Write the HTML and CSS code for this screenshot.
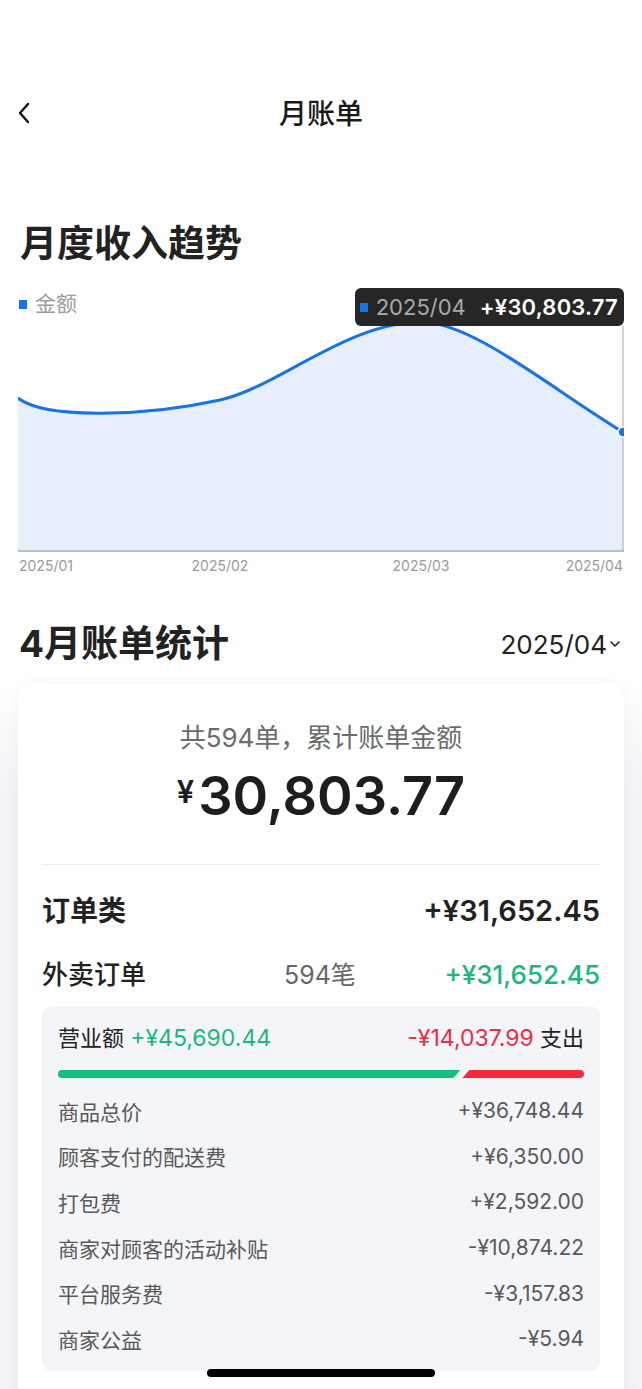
FILE: index.html
```html
<!DOCTYPE html>
<html lang="zh-CN">
<head>
    <meta charset="UTF-8">
    <meta name="viewport" content="width=device-width, initial-scale=1.0">
    <title>月账单</title>
    <link rel="stylesheet" href="styles.css">
</head>
<body>
    <div class="nav">
        <svg class="back" width="14" height="22" viewBox="0 0 14 22">
            <path d="M11 2 L3 11 L11 20" fill="none" stroke="#111" stroke-width="2.4" stroke-linecap="round" stroke-linejoin="round"/>
        </svg>
        <div class="nav-title">月账单</div>
    </div>

    <h2 class="section-title trend-title">月度收入趋势</h2>

    <div class="chart">
        <div class="legend"><span class="dot"></span>金额</div>
        <svg class="chart-svg" width="606" height="290" viewBox="0 0 606 290">
            <path d="M0,108 C25,128 120,128 202,110 C260,97 330,32 403,32 C455,32 535,100 605,142 L605,261 L0,261 Z" fill="#e7effc"/>
            <line x1="605" y1="36" x2="605" y2="261" stroke="#b5b5b5" stroke-width="1.2"/>
            <line x1="0" y1="261" x2="606" y2="261" stroke="#a9abb0" stroke-width="1.5"/>
            <path d="M0,108 C25,128 120,128 202,110 C260,97 330,32 403,32 C455,32 535,100 605,142" fill="none" stroke="#1a72e8" stroke-width="3"/>
            <circle cx="605" cy="142" r="5" fill="#1a72e8" stroke="#fff" stroke-width="1.5"/>
            <text x="1" y="281" class="axis" text-anchor="start">2025/01</text>
            <text x="202" y="281" class="axis" text-anchor="middle">2025/02</text>
            <text x="403" y="281" class="axis" text-anchor="middle">2025/03</text>
            <text x="605" y="281" class="axis" text-anchor="end">2025/04</text>
        </svg>
        <div class="tooltip">
            <span class="dot"></span>
            <span class="tip-date">2025/04</span>
            <span class="tip-value">+¥30,803.77</span>
        </div>
    </div>

    <div class="stats-head">
        <h2 class="section-title">4月账单统计</h2>
        <div class="month-pick">2025/04
            <svg width="10" height="6" viewBox="0 0 10 6"><path d="M1 1 L5 5 L9 1" fill="none" stroke="#222" stroke-width="1.6" stroke-linecap="round" stroke-linejoin="round"/></svg>
        </div>
    </div>

    <div class="stats-bg">
        <div class="card">
            <div class="total-label">共594单，累计账单金额</div>
            <div class="total-amount"><span class="yen">¥</span>30,803.77</div>
            <div class="divider"></div>

            <div class="cat-row">
                <span>订单类</span>
                <span>+¥31,652.45</span>
            </div>

            <div class="sub-row">
                <span class="sub-name">外卖订单</span>
                <span class="sub-count">594笔</span>
                <span class="sub-amount green">+¥31,652.45</span>
            </div>

            <div class="detail">
                <div class="split-row">
                    <span>营业额 <b class="green">+¥45,690.44</b></span>
                    <span><b class="red">-¥14,037.99</b> 支出</span>
                </div>
                <div class="bar">
                    <div class="bar-in" style="width: 76.5%"></div>
                    <div class="bar-out"></div>
                </div>
                <div class="item"><span>商品总价</span><span>+¥36,748.44</span></div>
                <div class="item"><span>顾客支付的配送费</span><span>+¥6,350.00</span></div>
                <div class="item"><span>打包费</span><span>+¥2,592.00</span></div>
                <div class="item"><span>商家对顾客的活动补贴</span><span>-¥10,874.22</span></div>
                <div class="item"><span>平台服务费</span><span>-¥3,157.83</span></div>
                <div class="item"><span>商家公益</span><span>-¥5.94</span></div>
            </div>
        </div>
    </div>

    <div class="home-bar"></div>
</body>
</html>
```

FILE: styles.css
```css
body {
    margin: 0;
    background: #fff;
    font-family: Inter, "Noto Sans CJK SC", sans-serif;
    color: #222;
    overflow: hidden;
    height: 1389px;
}
.nav {
    margin-top: 90px;
    height: 44px;
    display: flex;
    align-items: center;
    justify-content: center;
    position: relative;
}
.back {
    position: absolute;
    left: 17px;
    top: 12px;
}
.nav-title {
    font-size: 28px;
    font-weight: 500;
    color: #1a1a1a;
}
.section-title {
    margin: 0;
    font-size: 37px;
    font-weight: 700;
    line-height: 48px;
    color: #222;
}
.trend-title {
    margin: 86px 0 0 20px;
}
.chart {
    position: relative;
    margin: 22px 18px 0 18px;
    height: 290px;
}
.chart-svg {
    display: block;
    overflow: hidden;
}
.axis {
    font-family: Inter, sans-serif;
    font-size: 14px;
    fill: #9a9a9a;
}
.legend {
    position: absolute;
    left: 1px;
    top: 0;
    display: flex;
    align-items: center;
    gap: 8px;
    font-size: 21px;
    line-height: 28px;
    color: #9b9b9b;
}
.dot {
    width: 8px;
    height: 9px;
    background: #1a72e8;
    display: inline-block;
}
.tooltip {
    position: absolute;
    right: 0;
    top: -2px;
    height: 38px;
    padding: 0 6px 0 5px;
    background: #262626;
    border-radius: 6px;
    display: flex;
    align-items: center;
    white-space: nowrap;
    font-size: 22px;
}
.tooltip .dot {
    margin-right: 8px;
}
.tip-date {
    color: #a9a9a9;
    margin-right: 14px;
}
.tip-value {
    color: #fff;
    font-weight: 600;
    font-size: 22px;
    letter-spacing: 0.2px;
}
.stats-head {
    margin: 40px 22px 0 19px;
    display: flex;
    justify-content: space-between;
    align-items: center;
}
.month-pick {
    font-size: 26px;
    color: #222;
    display: flex;
    align-items: center;
    gap: 3px;
}
.stats-bg {
    margin-top: 17px;
    padding: 0 18px;
    background: linear-gradient(to bottom, #fff 0, #f3f4f7 110px);
}
.card {
    background: #fff;
    border-radius: 16px;
    padding: 36px 24px 40px 24px;
    box-shadow: 0 0 18px rgba(40, 50, 80, 0.05);
}
.total-label {
    text-align: center;
    font-size: 26px;
    line-height: 34px;
    color: #6b6b6b;
}
.total-amount {
    margin-top: 5px;
    text-align: center;
    font-size: 54px;
    line-height: 64px;
    font-weight: 600;
    color: #1d1d1d;
}
.yen {
    font-size: 31px;
    margin-right: 4px;
    vertical-align: 12px;
}
.divider {
    margin-top: 36px;
    height: 1px;
    background: #ececec;
}
.cat-row {
    margin-top: 26px;
    display: flex;
    justify-content: space-between;
    align-items: center;
    line-height: 40px;
    font-size: 29px;
    font-weight: 600;
}
.cat-row span:first-child {
    font-size: 28px;
}
.sub-row {
    margin-top: 24px;
    display: flex;
    align-items: center;
    line-height: 40px;
}
.sub-name {
    font-size: 26px;
    font-weight: 500;
    width: 242px;
}
.sub-count {
    font-size: 25px;
    color: #666;
    flex: 1;
}
.sub-amount {
    font-size: 26px;
    font-weight: 500;
}
.green {
    color: #19b97c;
}
.red {
    color: #f02b3f;
}
.detail {
    margin-top: 11px;
    background: #f4f5f9;
    border-radius: 10px;
    padding: 17px 16px 9px 16px;
}
.split-row {
    display: flex;
    justify-content: space-between;
    font-size: 22px;
    line-height: 30px;
    color: #222;
}
.split-row b {
    font-weight: 400;
    font-size: 23px;
}
.bar {
    margin-top: 17px;
    height: 8px;
    display: flex;
    gap: 2px;
}
.bar-in {
    background: #15bf7f;
    border-radius: 4px 0 0 4px;
    clip-path: polygon(0 0, 100% 0, calc(100% - 7px) 100%, 0 100%);
}
.bar-out {
    flex: 1;
    background: #f5283d;
    border-radius: 0 4px 4px 0;
    clip-path: polygon(7px 0, 100% 0, 100% 100%, 0 100%);
}
.item {
    display: flex;
    justify-content: space-between;
    align-items: center;
    height: 45.6px;
    font-size: 21px;
    color: #595959;
}
.bar + .item {
    margin-top: 10px;
}
.home-bar {
    position: fixed;
    left: 207px;
    bottom: 12px;
    width: 228px;
    height: 8px;
    border-radius: 4px;
    background: #000;
}
```
